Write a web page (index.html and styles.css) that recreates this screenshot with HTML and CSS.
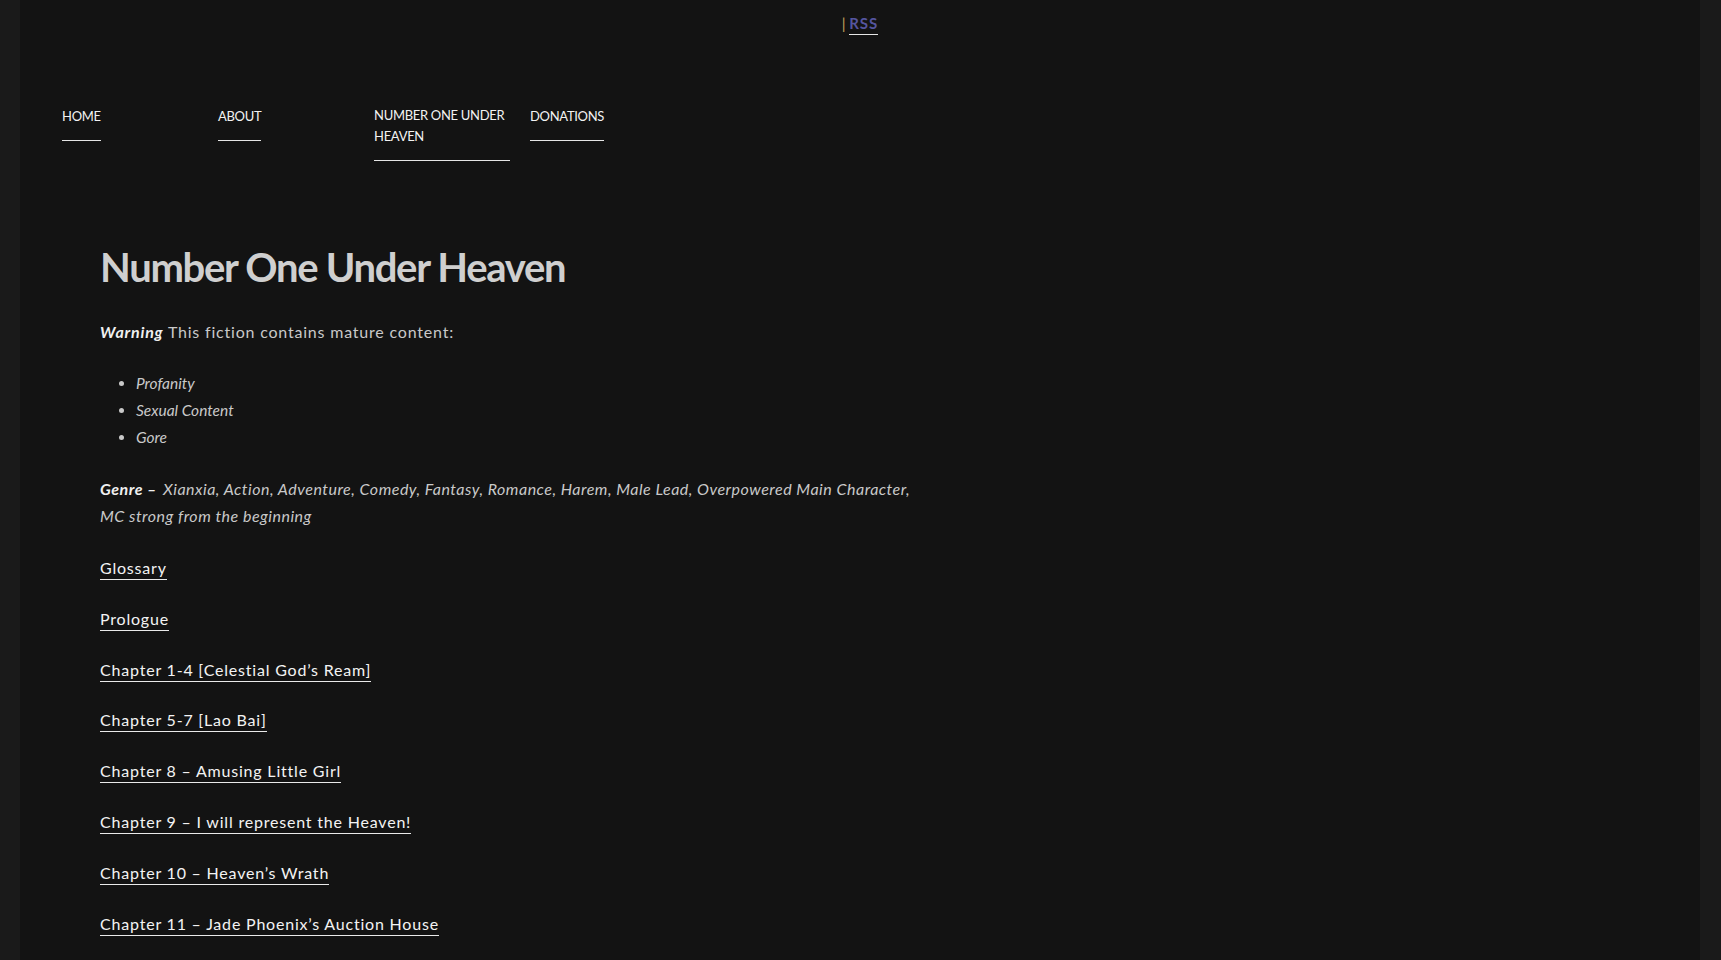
FILE: index.html
```html
<!DOCTYPE html>
<html lang="en">
<head>
<meta charset="utf-8">
<title>Number One Under Heaven</title>
<link rel="stylesheet" href="styles.css">
</head>
<body>
<div class="page">
  <div class="topbar"><span class="sep">|</span> <a class="rss" href="#">RSS</a></div>
  <nav class="mainnav">
    <ul>
      <li><a href="#">HOME</a></li>
      <li><a href="#">ABOUT</a></li>
      <li><a href="#">NUMBER ONE UNDER HEAVEN</a></li>
      <li><a href="#">DONATIONS</a></li>
    </ul>
  </nav>
  <main class="content">
    <h1>Number One Under Heaven</h1>
    <p><strong><em>Warning</em></strong> This fiction contains mature content:</p>
    <ul class="warnings">
      <li><em>Profanity</em></li>
      <li><em>Sexual Content</em></li>
      <li><em>Gore</em></li>
    </ul>
    <p class="genre"><strong>Genre –</strong> Xianxia, Action, Adventure, Comedy, Fantasy, Romance, Harem, Male Lead, Overpowered Main Character, MC strong from the beginning</p>
    <p><a href="#">Glossary</a></p>
    <p><a href="#">Prologue</a></p>
    <p><a href="#">Chapter 1-4 [Celestial God’s Ream]</a></p>
    <p><a href="#">Chapter 5-7 [Lao Bai]</a></p>
    <p><a href="#">Chapter 8 – Amusing Little Girl</a></p>
    <p><a href="#">Chapter 9 – I will represent the Heaven!</a></p>
    <p><a href="#">Chapter 10 – Heaven’s Wrath</a></p>
    <p><a href="#">Chapter 11 – Jade Phoenix’s Auction House</a></p>
  </main>
</div>
</body>
</html>
```

FILE: styles.css
```css
html, body {
  margin: 0;
  padding: 0;
}
body {
  background: #1a1a1a;
  color: #c9c9c9;
  font-family: Lato, "Open Sans", sans-serif;
  height: 960px;
  overflow: hidden;
}
.page {
  margin: 0 21px 0 20px;
  background: #131313;
  min-height: 960px;
}
.topbar {
  text-align: center;
  padding-top: 13px;
  font-size: 15px;
  font-weight: 700;
  line-height: 20px;
  height: 26px;
}
.sep {
  color: #c6a55e;
  font-weight: 400;
}
.rss {
  color: #55559f;
  text-decoration: none;
  letter-spacing: 1px;
  border-bottom: 1px solid #e6e6e6;
  padding-bottom: 2px;
}
.mainnav {
  padding: 66px 0 0 42px;
}
.mainnav ul {
  list-style: none;
  margin: 0;
  padding: 0;
  display: flex;
}
.mainnav li {
  width: 156px;
}
.mainnav a {
  display: inline-block;
  max-width: 136px;
  color: #f2f2f2;
  text-decoration: none;
  font-size: 13px;
  letter-spacing: -0.3px;
  line-height: 21px;
  padding-bottom: 13px;
  border-bottom: 1px solid #e6e6e6;
}
.content {
  padding: 78px 0 0 80px;
  width: 830px;
  font-size: 16px;
  line-height: 25.6px;
  letter-spacing: 0.8px;
}
.content h1 {
  margin: 0 0 24px;
  font-size: 40px;
  line-height: 56px;
  font-weight: 700;
  letter-spacing: -1.3px;
  color: #cfcfcf;
}
.content p {
  margin: 0 0 25.3px;
}
.content strong {
  color: #f0f0f0;
}
.warnings {
  margin: 0 0 25.6px;
  padding-left: 36px;
  letter-spacing: 0;
  font-size: 15.5px;
  line-height: 27px;
}
.genre {
  font-style: italic;
  letter-spacing: 0.5px;
  line-height: 26.5px;
}
.genre strong {
  padding-right: 2px;
}
.content p a {
  color: #f3f3f3;
  text-decoration: none;
  border-bottom: 1px solid #eaeaea;
  padding-bottom: 2px;
}
```
